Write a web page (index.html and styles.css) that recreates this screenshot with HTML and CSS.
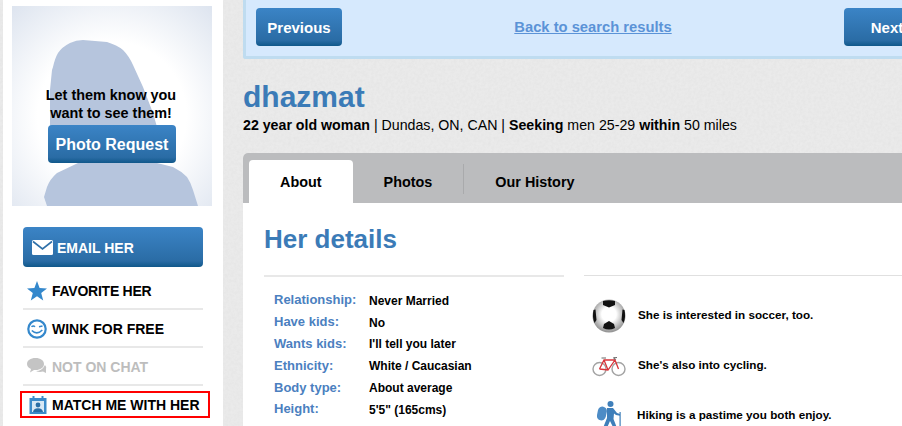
FILE: index.html
```html
<!DOCTYPE html>
<html lang="en">
<head>
    <meta charset="UTF-8">
    <meta name="viewport" content="width=device-width, initial-scale=1.0">
    <title>dhazmat</title>
    <link rel="stylesheet" href="styles.css">
</head>
<body>
    <div class="page">
        <aside class="sidebar">
            <div class="photo">
                <svg class="silhouette" viewBox="0 0 200 200" width="200" height="200">
                    <path d="M40 64 L41 61 Q43 52 46 47 Q50 41 58 37 Q64 34 71 34 L95 36 Q105 39 111 44 Q117 50 121 59 L131 81 L141 107 L145 121 L145 157 L161 161 Q169 165 175 171 Q179 177 181 184 L186 200 L35 200 L32 191 L35 181 Q38 173 45 167 L66 157 L55 157 L38 119 L38 84 Z"/>
                </svg>
                <p class="photo-text">Let them know you<br>want to see them!</p>
                <a class="btn btn-photo" href="#">Photo Request</a>
            </div>
            <div class="menu">
                <a class="btn btn-email" href="#">
                    <svg viewBox="0 0 21 15" width="21" height="15">
                        <rect width="21" height="15" rx="1.5" fill="#fff"/>
                        <path d="M1 1.5 L10.5 9 L20 1.5" fill="none" stroke="#2f70a8" stroke-width="1.6"/>
                    </svg>
                    EMAIL HER
                </a>
                <a class="menu-row menu-row-fav" href="#">
                    <svg viewBox="0 0 20 20" width="20" height="20">
                        <path fill="#3488cc" d="M10 0 L12.6 7 L20 7.4 L14.2 12 L16.2 19.5 L10 15.3 L3.8 19.5 L5.8 12 L0 7.4 L7.4 7 Z"/>
                    </svg>
                    FAVORITE HER
                </a>
                <a class="menu-row" href="#">
                    <svg viewBox="0 0 20 20" width="20" height="20" fill="none" stroke="#3488cc">
                        <circle cx="10" cy="10" r="8.7" stroke-width="2.2"/>
                        <path d="M4.5 7.8 Q6.3 6 8 7.8 M12 7.8 L15.5 7" stroke-width="1.5"/>
                        <path d="M4.8 11.5 Q10 16.5 15.3 11" stroke-width="1.6"/>
                    </svg>
                    WINK FOR FREE
                </a>
                <a class="menu-row menu-row-off" href="#">
                    <svg viewBox="0 0 20 18" width="20" height="18" fill="#c4c4c4">
                        <path d="M8.5 0 C13.5 0 17 2.5 17 6 C17 9.5 13.5 12 8.5 12 L7 12 L3 14.5 L4 11 C1.5 10 0 8.2 0 6 C0 2.5 3.5 0 8.5 0 Z"/>
                        <path d="M18 7 Q20 9 19 11.5 L19 15 L16 13.5 Q12 14.5 9 13 Q15 13 18 7 Z"/>
                    </svg>
                    NOT ON CHAT
                </a>
                <a class="menu-row menu-row-match" href="#">
                    <svg viewBox="0 0 17 18" width="17" height="18">
                        <rect y="2" width="17" height="16" fill="#3c8bc9"/>
                        <rect x="3" y="0" width="2" height="4" fill="#3c8bc9"/>
                        <rect x="12" y="0" width="2" height="4" fill="#3c8bc9"/>
                        <rect x="2.5" y="5" width="12" height="11" fill="#d7e8f5"/>
                        <circle cx="8.5" cy="9" r="2.4" fill="#2a6ea6"/>
                        <path fill="#2a6ea6" d="M3.5 16 Q4 12.5 8.5 12.2 Q13 12.5 13.5 16 Z"/>
                    </svg>
                    MATCH ME WITH HER
                </a>
            </div>
        </aside>

        <main class="main">
            <div class="topbar">
                <a class="btn btn-nav" href="#">Previous</a>
                <a class="back-link" href="#">Back to search results</a>
                <a class="btn btn-nav" href="#">Next</a>
            </div>

            <h1 class="username">dhazmat</h1>
            <p class="summary"><b>22 year old woman</b> | Dundas, ON, CAN | <b>Seeking</b> men 25-29 <b>within</b> 50 miles</p>

            <section class="panel">
                <nav class="tabs">
                    <a class="tab tab-active" href="#">About</a>
                    <a class="tab tab-split" href="#">Photos</a>
                    <a class="tab" href="#">Our History</a>
                </nav>
                <div class="panel-body">
                    <h2>Her details</h2>
                    <div class="columns">
                        <dl class="details">
                            <dt>Relationship:</dt><dd>Never Married</dd>
                            <dt>Have kids:</dt><dd>No</dd>
                            <dt>Wants kids:</dt><dd>I'll tell you later</dd>
                            <dt>Ethnicity:</dt><dd>White / Caucasian</dd>
                            <dt>Body type:</dt><dd>About average</dd>
                            <dt>Height:</dt><dd>5'5" (165cms)</dd>
                            <dt>Faith:</dt><dd>Christian</dd>
                        </dl>
                        <ul class="common">
                            <li>
                                <svg viewBox="0 0 34 34" width="34" height="34">
                                    <defs>
                                        <radialGradient id="ball" cx="50%" cy="45%" r="55%">
                                            <stop offset="0.4" stop-color="#fff"/>
                                            <stop offset="1" stop-color="#8f8f8f"/>
                                        </radialGradient>
                                    </defs>
                                    <circle cx="17" cy="17" r="16.5" fill="url(#ball)"/>
                                    <path fill="#111" d="M11 2 Q17 0.5 23 2 L23 6 L17 8.5 L11 6 Z"/>
                                    <path fill="#111" d="M12 25 L17 22 L22 25 L23 29 Q17 32 11 29 Z"/>
                                    <path fill="#111" d="M1.5 11 L3.5 10.5 L4.5 21 L2.5 24 Q0 18 1.5 11 Z"/>
                                    <path fill="#111" d="M32.5 11 L30.5 10.5 L29.5 21 L31.5 24 Q34 18 32.5 11 Z"/>
                                </svg>
                                <span>She is interested in soccer, too.</span>
                            </li>
                            <li>
                                <svg viewBox="0 0 34 22" width="34" height="22" fill="none">
                                    <circle cx="7.5" cy="14" r="6.5" stroke="#a3a3a3" stroke-width="1.4"/>
                                    <circle cx="26.5" cy="14" r="6.5" stroke="#a3a3a3" stroke-width="1.4"/>
                                    <path d="M7.5 14 L12 5 L23 5 L16 15 L7.5 14 M12 5 L16 15 M23 5 L26.5 14" stroke="#d8343a" stroke-width="1.3"/>
                                    <path d="M9.5 3 L14 3 M21 3 L25 2.5 M23 5 L22.5 2.5" stroke="#666" stroke-width="1"/>
                                </svg>
                                <span>She's also into cycling.</span>
                            </li>
                            <li class="common-hike">
                                <svg viewBox="0 0 25 27" width="25" height="27">
                                    <circle cx="13.5" cy="3" r="3" fill="#3f7fba"/>
                                    <rect x="0.5" y="5.5" width="9" height="14" rx="4.5" transform="rotate(12 5 12)" fill="#4d8cc6"/>
                                    <path fill="#3f7fba" d="M10 7 L16 7 L20 12 L23 13 L23 14.8 L19 14 L17 12.5 L16.5 18 L20 27 L16.5 27 L13 20 L10 27 L6 27 L10 17 Z"/>
                                    <rect x="22.5" y="11" width="1.2" height="16" fill="#3f7fba"/>
                                </svg>
                                <span>Hiking is a pastime you both enjoy.</span>
                            </li>
                        </ul>
                    </div>
                </div>
            </section>
        </main>
    </div>
</body>
</html>
```

FILE: styles.css
```css
html, body {
    height: 100%;
    overflow: hidden;
}
body {
    margin: 0;
    font-family: "Liberation Sans", Arial, sans-serif;
    font-size: 14px;
    color: #000;
    background-color: #ebebeb;
    background-image: url("data:image/svg+xml,%3Csvg xmlns='http://www.w3.org/2000/svg' width='200' height='200'%3E%3Cfilter id='n'%3E%3CfeTurbulence type='fractalNoise' baseFrequency='0.35' numOctaves='2'/%3E%3CfeColorMatrix values='0 0 0 0 0.5 0 0 0 0 0.5 0 0 0 0 0.5 0 0 0 0.18 -0.04'/%3E%3C/filter%3E%3Crect width='200' height='200' filter='url(%23n)'/%3E%3C/svg%3E");
}
a {
    text-decoration: none;
    color: inherit;
}
.page {
    display: flex;
    width: 940px;
    height: 426px;
    align-items: stretch;
}

/* left column */
.sidebar {
    width: 220px;
    margin-left: 3px;
    padding: 6px 0 0 9px;
    box-sizing: border-box;
    background: #fff;
    flex-shrink: 0;
}
.photo {
    position: relative;
    width: 200px;
    height: 200px;
    box-sizing: border-box;
    padding-top: 80px;
    display: flex;
    flex-direction: column;
    align-items: center;
    background: radial-gradient(circle at 50% 55%, #fff 50%, #dde4ef 100%);
}
.silhouette {
    position: absolute;
    top: 0;
    left: 0;
    fill: #b6c5dd;
}
.photo-text {
    position: relative;
    margin: 0 2px 3px 0;
    font-size: 14.4px;
    line-height: 18px;
    font-weight: bold;
    text-align: center;
}
.btn {
    display: flex;
    align-items: center;
    justify-content: center;
    box-sizing: border-box;
    border-radius: 4px;
    font-weight: bold;
    color: #fff;
    background: linear-gradient(to bottom, #3b84c6 0%, #2a6ca5 85%, #10588a 100%);
}
.btn-photo {
    position: relative;
    width: 128px;
    height: 38px;
    padding-top: 1px;
    font-size: 16px;
}
.menu {
    width: 180px;
    margin: 21px 0 0 11px;
}
.btn-email {
    height: 40px;
    justify-content: flex-start;
    padding: 1px 0 0 9px;
    gap: 4px;
    font-size: 14px;
}
.menu-row {
    display: flex;
    align-items: center;
    height: 38px;
    box-sizing: border-box;
    padding-top: 2px;
    border-bottom: 2px solid #e8e8e8;
    font-size: 14px;
    font-weight: bold;
}
.menu-row svg {
    width: 24px;
    margin-left: 2px;
    margin-right: 3px;
    flex-shrink: 0;
}
.btn-email + .menu-row {
    margin-top: 5px;
}
.menu-row-fav {
    letter-spacing: -0.25px;
}
.menu-row-off {
    color: #bdbdbd;
}
.menu-row-match {
    width: 190px;
    height: 27px;
    margin: 5px 0 0 -3px;
    padding-top: 0;
    border: 2px solid #f00;
}
.menu-row-match svg {
    margin-left: 4px;
    margin-right: 2px;
}

/* right column */
.main {
    flex: 1;
    min-width: 0;
    margin-left: 20px;
}
.topbar {
    display: flex;
    align-items: center;
    justify-content: space-between;
    height: 59px;
    box-sizing: border-box;
    padding: 0 10px 2px;
    background: #d6e9fd;
    border-left: 3px solid #bfdcf0;
    border-bottom: 3px solid #bfdcf0;
    border-bottom-left-radius: 3px;
}
.btn-nav {
    width: 86px;
    height: 38px;
    font-size: 15px;
}
.back-link {
    font-size: 14.75px;
    font-weight: bold;
    color: #5b93d7;
    text-decoration: underline;
}
.username {
    margin: 20px 0 0;
    font-size: 30px;
    line-height: 36px;
    font-weight: bold;
    color: #3b7bb7;
}
.summary {
    margin: 2px 0 0;
    font-size: 14.2px;
    line-height: 16px;
}
.panel {
    margin-top: 20px;
    background: #fff;
    border-top-left-radius: 5px;
    height: 273px;
    overflow: hidden;
}
.tabs {
    display: flex;
    align-items: flex-start;
    height: 50px;
    box-sizing: border-box;
    padding: 7px 0 0 6px;
    background: #bbbcbe;
}
.tab {
    margin-top: 4px;
    height: 30px;
    padding: 0 31px;
    font-size: 14.4px;
    line-height: 36px;
    font-weight: bold;
}
.tab-active {
    margin-top: 0;
    height: 43px;
    line-height: 44px;
    background: #fff;
    border-radius: 4px 4px 0 0;
}
.tab-split {
    border-right: 1px solid #a9aaac;
}
.panel-body {
    padding: 0 0 0 21px;
}
h2 {
    margin: 20px 0 0;
    height: 32px;
    font-size: 26px;
    line-height: 32px;
    font-weight: bold;
    color: #3b7bb7;
}
.columns {
    display: flex;
    gap: 20px;
    margin-top: 20px;
}
.details {
    display: grid;
    grid-template-columns: 95px 1fr;
    grid-auto-rows: 21.8px;
    align-items: center;
    width: 300px;
    box-sizing: border-box;
    margin: 0;
    padding: 12px 0 0 10px;
    border-top: 2px solid #e8e8e8;
}
.details dt {
    font-size: 13px;
    font-weight: bold;
    color: #4b80bf;
}
.details dd {
    margin: 2px 0 0;
    font-size: 12px;
    font-weight: bold;
}
.common {
    flex: 1;
    margin: 0;
    padding: 0 0 0 8px;
    list-style: none;
    border-top: 1px solid #e0e0e0;
}
.common li {
    display: flex;
    align-items: center;
    gap: 12px;
    height: 50px;
    font-size: 11.7px;
    font-weight: bold;
}
.common li span {
    margin-bottom: 3px;
}
.common li:first-child {
    margin-top: 15px;
}
.common svg {
    flex-shrink: 0;
}
.common-hike svg {
    margin-left: 5px;
    margin-right: 3px;
    margin-bottom: 4px;
}
```
